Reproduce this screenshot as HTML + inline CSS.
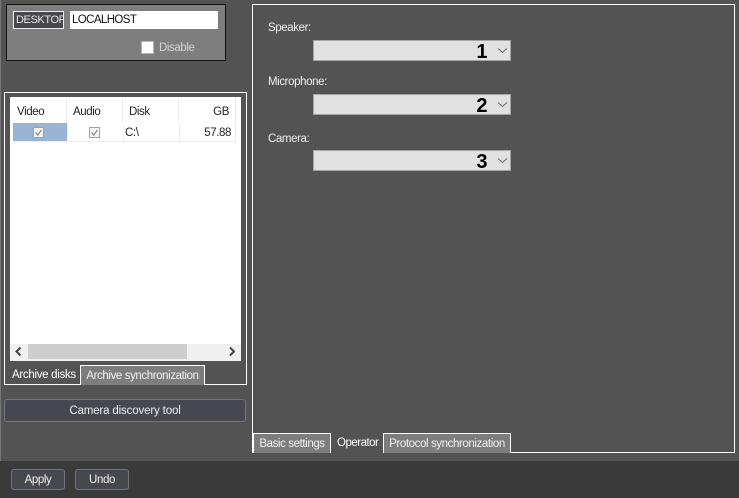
<!DOCTYPE html>
<html><head><meta charset="utf-8">
<style>
html,body{margin:0;padding:0;width:739px;height:498px;overflow:hidden;background:#535353;font-family:"Liberation Sans",sans-serif;font-size:11.5px;letter-spacing:-.4px;color:#fff}
div{position:absolute;box-sizing:border-box;white-space:nowrap}
.t{line-height:14px}
.blk{color:#222}
.tab{background:#7d7d7d;border:1px solid #fff;border-bottom:none;height:20px;line-height:20px;text-align:center;color:#f2f2f2}
.btn{background:#47474f;border:1px solid #74747a;border-radius:3px;color:#f0f0f0;text-align:center}
.cb{position:absolute;box-sizing:border-box;width:11px;height:11px;border:1px solid #a0a0a0;background:#f4f4f4}
.combo{left:313px;width:198px;height:21px;background:#e1e1e1;border:1px solid #a5a5a5}
.num{position:absolute;right:23px;top:1px;font-size:20px;letter-spacing:-.5px;font-weight:bold;color:#000;line-height:21px}
</style></head><body>
<div style="left:0;top:0;width:1px;height:461px;background:#777"></div>

<div style="left:6px;top:4px;width:220px;height:57px;background:#7e7e7e;border:1px solid #111"></div>
<div class="t" style="left:13px;top:11px;width:51px;height:18px;background:#47474c;border:1px solid #eee;line-height:16px;padding-left:2px;overflow:hidden;color:#e8e8e8;font-size:11px">DESKTOP</div>
<div class="t" style="left:70px;top:11px;width:148px;height:18px;background:#fff;color:#111;line-height:19px;padding-left:2px;letter-spacing:-.6px">LOCALHOST</div>
<div style="left:141px;top:41px;width:13px;height:13px;background:#fff;border:1px solid #b5b5b5"></div>
<div class="t" style="left:159px;top:41px;color:#d4d4d4">Disable</div>

<div style="left:4px;top:92px;width:243px;height:293px;border:1px solid #fff"></div>
<div style="left:10px;top:97px;width:231px;height:264px;background:#fff"></div>
<div style="left:66px;top:98px;width:1px;height:24px;background:#ececec"></div>
<div style="left:122px;top:98px;width:1px;height:24px;background:#ececec"></div>
<div style="left:178px;top:98px;width:1px;height:24px;background:#ececec"></div>
<div style="left:235px;top:98px;width:1px;height:24px;background:#ececec"></div>
<div class="t blk" style="left:17px;top:105px">Video</div>
<div class="t blk" style="left:73px;top:105px">Audio</div>
<div class="t blk" style="left:129px;top:105px">Disk</div>
<div class="t blk" style="right:510px;top:105px">GB</div>
<div style="left:13px;top:123px;width:54px;height:19px;background:#9ab4d3"></div>
<div style="left:13px;top:141px;width:223px;height:1px;background:#ececec"></div>
<div style="left:67px;top:123px;width:1px;height:19px;background:#ececec"></div>
<div style="left:123px;top:123px;width:1px;height:19px;background:#ececec"></div>
<div style="left:179px;top:123px;width:1px;height:19px;background:#ececec"></div>
<div style="left:235px;top:123px;width:1px;height:19px;background:#ececec"></div>
<span class="cb" style="left:33px;top:127px"></span>
<span class="cb" style="left:89px;top:127px"></span>
<svg style="position:absolute;left:33px;top:127px" width="11" height="11"><path d="M2.5 5.5L4.8 8L8.5 3" fill="none" stroke="#888" stroke-width="1.2"/></svg>
<svg style="position:absolute;left:89px;top:127px" width="11" height="11"><path d="M2.5 5.5L4.8 8L8.5 3" fill="none" stroke="#888" stroke-width="1.2"/></svg>
<div class="t blk" style="left:125px;top:126px">C:\</div>
<div class="t blk" style="right:508px;top:126px">57.88</div>

<div style="left:10px;top:344px;width:231px;height:17px;background:#f0f0f0"></div>
<div style="left:28px;top:344px;width:159px;height:15px;background:#cdcdcd"></div>
<svg style="position:absolute;left:14px;top:346px" width="10" height="11"><path d="M6.5 1.5L2.5 5.5L6.5 9.5" fill="none" stroke="#444" stroke-width="2"/></svg>
<svg style="position:absolute;left:227px;top:346px" width="10" height="11"><path d="M3 1.5L7 5.5L3 9.5" fill="none" stroke="#444" stroke-width="2"/></svg>
<div class="t" style="left:12px;top:368px;letter-spacing:-.3px">Archive disks</div>
<div class="tab" style="left:80px;top:365px;width:125px">Archive synchronization</div>

<div class="btn" style="left:4px;top:399px;width:242px;height:23px;line-height:22px;letter-spacing:-.15px">Camera discovery tool</div>

<div style="left:252px;top:4px;width:483px;height:449px;border:1px solid #fff"></div>
<div class="t" style="left:268px;top:21px;color:#eee">Speaker:</div>
<div class="combo" style="top:40px"><span class="num">1</span></div>
<div class="t" style="left:268px;top:75px;color:#eee">Microphone:</div>
<div class="combo" style="top:94px"><span class="num">2</span></div>
<div class="t" style="left:268px;top:132px;color:#eee">Camera:</div>
<div class="combo" style="top:150px"><span class="num">3</span></div>
<svg style="position:absolute;left:497px;top:47px" width="11" height="7"><path d="M1 1.5L5.5 5.5L10 1.5" fill="none" stroke="#666"/></svg>
<svg style="position:absolute;left:497px;top:101px" width="11" height="7"><path d="M1 1.5L5.5 5.5L10 1.5" fill="none" stroke="#666"/></svg>
<svg style="position:absolute;left:497px;top:157px" width="11" height="7"><path d="M1 1.5L5.5 5.5L10 1.5" fill="none" stroke="#666"/></svg>

<div class="tab" style="left:253px;top:433px;width:78px">Basic settings</div>
<div style="left:331px;top:433px;width:53px;height:20px;background:#535353"></div>
<div class="t" style="left:337px;top:436px;letter-spacing:-.5px">Operator</div>
<div class="tab" style="left:383px;top:433px;width:128px">Protocol synchronization</div>

<div style="left:0;top:461px;width:739px;height:37px;background:#3b3a3a"></div>
<div class="btn" style="left:11px;top:469px;width:54px;height:21px;line-height:20px">Apply</div>
<div class="btn" style="left:75px;top:469px;width:54px;height:21px;line-height:20px">Undo</div>
</body></html>
